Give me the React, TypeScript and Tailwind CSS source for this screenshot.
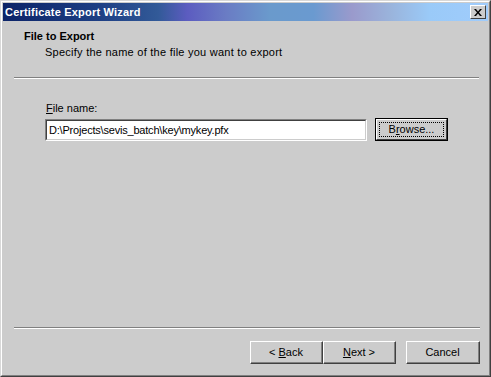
import React from "react";

const font = { fontFamily: '"Liberation Sans", Arial, sans-serif' };

function RaisedButton({ children, className = "" }: { children: React.ReactNode; className?: string }) {
  return (
    <div
      className={`h-[23px] bg-[#cccccc] border-t border-l border-t-white border-l-white border-r border-b border-r-[#404040] border-b-[#404040] ${className}`}
    >
      <div className="w-full h-full border-r border-b border-r-[#808080] border-b-[#808080] flex items-center justify-center text-[11px] text-black">
        {children}
      </div>
    </div>
  );
}

export default function App() {
  return (
    <div style={font} className="w-[491px] h-[377px] bg-[#cccccc] border border-t-[#d8d8d8] border-l-[#d8d8d8] border-r-[#404040] border-b-[#404040]">
      <div className="w-full h-full border border-t-white border-l-white border-r-[#808080] border-b-[#808080] p-px flex flex-col">
        {/* Title bar */}
        <div className="h-[18px] flex items-center justify-between pl-[2px] pr-[2px] bg-[linear-gradient(90deg,#0c2468_0%,#1e3f84_20%,#325a98_32%,#5c5cc0_38%,#6a7cc4_46%,#6a9acc_55%,#6a9ad0_64%,#9a9acc_72%,#9ab4dc_80%,#9acaf8_88%,#a0ccfc_100%)]">
          <span className="text-white font-bold text-[11px] leading-none tracking-[0.2px]">Certificate Export Wizard</span>
          <div className="w-[16px] h-[14px] bg-[#cccccc] border-t border-l border-t-white border-l-white border-r border-b border-r-[#404040] border-b-[#404040] flex items-center justify-center">
            <svg width="8" height="7" viewBox="0 0 8 7">
              <path d="M0 0h2l2 2.5L6 0h2L5 3.5 8 7H6L4 4.5 2 7H0l3-3.5z" fill="#000" />
            </svg>
          </div>
        </div>

        {/* Header */}
        <div className="h-[56px] pt-[9px] text-[11px] leading-[13px] text-black">
          <div className="pl-[21px] font-bold">File to Export</div>
          <div className="pl-[42px] mt-[3px] tracking-[0.25px]">Specify the name of the file you want to export</div>
        </div>
        <div className="ml-[11px] mr-[9px]">
          <div className="h-px bg-[#808080]" />
          <div className="h-px bg-white" />
        </div>

        {/* Body */}
        <div className="flex-1 pl-[42px] pt-[23px] text-[11px] leading-[13px] text-black">
          <div className="pl-px">
            <span className="underline">F</span>ile name:
          </div>
          <div className="flex items-start mt-[3px]">
            <div className="w-[322px] h-[22px] mt-px border-t border-l border-t-[#808080] border-l-[#808080] border-r border-b border-r-white border-b-white">
              <div className="w-full h-full bg-white border-t border-l border-t-[#404040] border-l-[#404040] border-r border-b border-r-[#cccccc] border-b-[#cccccc] flex items-center pl-[2px] text-[11px] tracking-[-0.2px]">
                D:\Projects\sevis_batch\key\mykey.pfx
              </div>
            </div>
            <div className="ml-[8px] w-[73px] h-[23px] border border-black">
              <div className="w-full h-full border-t border-l border-t-white border-l-white border-r border-b border-r-[#404040] border-b-[#404040] p-[2px]">
                <div className="w-full h-full border border-dotted border-black flex items-center justify-center">
                  B<span className="underline">r</span>owse...
                </div>
              </div>
            </div>
          </div>
        </div>

        {/* Bottom separator */}
        <div className="ml-[11px] mr-[8px]">
          <div className="h-px bg-[#808080]" />
          <div className="h-px bg-white" />
        </div>

        {/* Footer */}
        <div className="h-[45px] pt-[12px] flex items-start justify-end pr-[8px]">
          <RaisedButton className="w-[73px]">
            &lt; <span className="underline ml-[3px]">B</span>ack
          </RaisedButton>
          <RaisedButton className="w-[73px]">
            <span className="underline">N</span>ext &gt;
          </RaisedButton>
          <RaisedButton className="w-[74px] ml-[10px]">Cancel</RaisedButton>
        </div>
      </div>
    </div>
  );
}
